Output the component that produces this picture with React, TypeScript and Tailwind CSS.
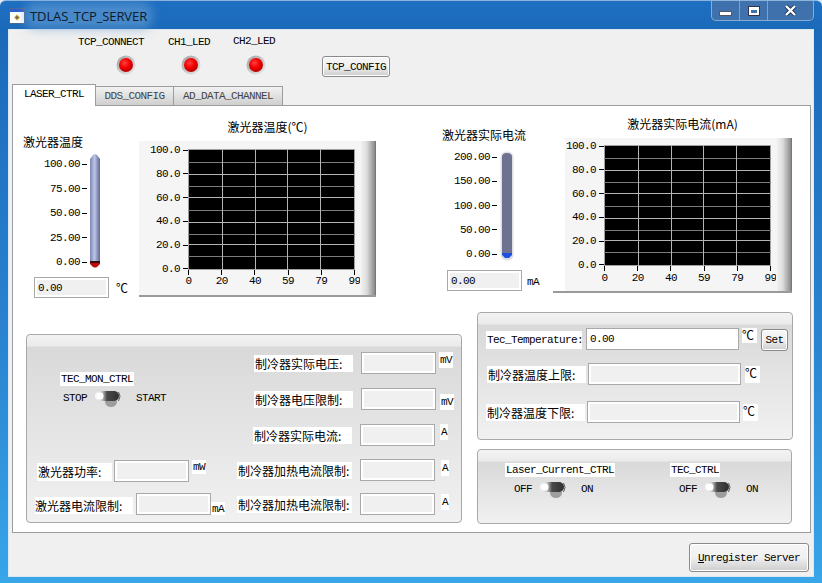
const mono = "font-['Liberation_Mono','Noto_Sans_CJK_SC',monospace] text-[11px] tracking-[-0.6px] leading-[12px] text-black whitespace-nowrap";
const cjk = "font-['Noto_Sans_CJK_SC','Liberation_Sans',sans-serif] text-[12px] leading-[14px] text-black whitespace-nowrap";
const valueBox = "w-[75px] h-[22px] shrink-0 border border-[#a9a9a9] bg-[#f0f0f0] shadow-[inset_0_0_0_2px_#fff]";
const groupBg = "bg-[linear-gradient(180deg,#f3f3f3_0,#ebebeb_11px,#d9d9d9_12px,#f1f1f1_100%)] border border-[#a8a8a8] rounded-[4px]";

const hLines = [
  { y: 13, major: false }, { y: 25, major: true }, { y: 37, major: false }, { y: 48, major: true },
  { y: 61, major: false }, { y: 73, major: true }, { y: 85, major: false }, { y: 95, major: true }, { y: 107, major: false },
];
const vLines = [34, 67, 99, 132];
const yLabels = ['100.0', '80.0', '60.0', '40.0', '20.0', '0.0'];
const xLabels = ['0', '20', '40', '59', '79', '99'];

function Plot() {
  return (
    <svg width="167" height="121" className="block shrink-0">
      <rect width="167" height="121" fill="#000" />
      <rect x="0.5" y="0.5" width="166" height="120" fill="none" stroke="#a0a0a0" />
      {hLines.map((l) => (
        <line key={l.y} x1="0" x2="167" y1={l.y + 0.5} y2={l.y + 0.5} stroke={l.major ? '#b4b4b4' : '#7c7c7c'} />
      ))}
      {vLines.map((x) => (
        <line key={x} x1={x + 0.5} x2={x + 0.5} y1="0" y2="121" stroke="#b4b4b4" />
      ))}
    </svg>
  );
}

function Chart({ wide }: { wide?: boolean }) {
  return (
    <div className={`flex border-b-2 border-[#9a9a9a] ${wide ? 'w-[239px] h-[155px] bg-[linear-gradient(90deg,#fff_12px,#f5f5f5_12px)]' : 'w-[237px] h-[156px] bg-[#f5f5f5]'}`}>
      <div className={`flex flex-col justify-between h-[131px] shrink-0 ${wide ? 'w-[51px] mt-[2px]' : 'w-[49px] mt-[3px]'}`}>
        {yLabels.map((l) => (
          <div key={l} className="flex items-center justify-end gap-[3px] h-[12px]">
            <span className={mono}>{l}</span>
            <span className="w-[5px] h-px bg-black" />
          </div>
        ))}
      </div>
      <div className={`shrink-0 w-[167px] ${wide ? 'mt-[7px]' : 'mt-[8px]'}`}>
        <Plot />
        <div className="flex justify-between">
          {xLabels.map((l) => (
            <div key={l} className="flex flex-col items-center w-px">
              <span className="w-px h-[5px] bg-black" />
              <span className={`${mono} ${wide ? 'mt-[1px]' : 'mt-0'}`}>{l}</span>
            </div>
          ))}
        </div>
      </div>
      <div className="flex-1" />
      <div className="w-[16px] bg-[linear-gradient(90deg,#f5f5f5,#dcdcdc_45%,#8a8a8a)] border-r border-[#777]" />
    </div>
  );
}

function Scale({ items }: { items: string[] }) {
  return (
    <div className="flex flex-col justify-between flex-1">
      {items.map((l) => (
        <div key={l} className="flex items-center justify-end gap-[2px] h-[12px]">
          <span className={mono}>{l}</span>
          <span className="w-[5px] h-px bg-black" />
        </div>
      ))}
    </div>
  );
}

function RedTube() {
  return (
    <svg width="10" height="114" className="block shrink-0">
      <defs>
        <linearGradient id="tubeA" x1="0" x2="1" y1="0" y2="0">
          <stop offset="0" stopColor="#7c86b4" />
          <stop offset="0.45" stopColor="#bcc4e6" />
          <stop offset="1" stopColor="#5f6690" />
        </linearGradient>
      </defs>
      <path d="M0 5 L3 1 Q5 -1 7 1 L10 5 V108 H0 Z" fill="url(#tubeA)" />
      <rect x="0" y="107" width="10" height="2" fill="#301010" />
      <path d="M0 109 H10 V110 L7 113 Q5 114 3 113 L0 110 Z" fill="#c00808" />
    </svg>
  );
}

function BlueTube() {
  return (
    <svg width="14" height="110" className="block shrink-0">
      <rect x="0.5" y="0.5" width="13" height="109" rx="6" fill="#e0e0e4" />
      <path d="M2 6 Q2 2 7 2 Q12 2 12 6 V104 H2 Z" fill="#6f7190" />
      <path d="M2 102 H12 V104 L9 107 H5 L2 104 Z" fill="#1c4fe0" />
    </svg>
  );
}

function Led() {
  return (
    <svg width="20" height="20" className="block">
      <defs>
        <radialGradient id="ledRed" cx="0.4" cy="0.35" r="0.7">
          <stop offset="0" stopColor="#ff4040" />
          <stop offset="0.5" stopColor="#f40000" />
          <stop offset="1" stopColor="#b00000" />
        </radialGradient>
        <linearGradient id="ledRing" x1="0" x2="1" y1="0" y2="1">
          <stop offset="0" stopColor="#a0a0a0" />
          <stop offset="1" stopColor="#ececec" />
        </linearGradient>
      </defs>
      <circle cx="10" cy="10" r="9.5" fill="url(#ledRing)" />
      <circle cx="10" cy="10" r="7" fill="url(#ledRed)" />
    </svg>
  );
}

function Toggle({ id }: { id: string }) {
  return (
    <svg width="27" height="18" className="block shrink-0">
      <defs>
        <linearGradient id={id} x1="0" x2="1" y1="0" y2="0">
          <stop offset="0" stopColor="#ffffff" />
          <stop offset="0.28" stopColor="#d0d0d0" />
          <stop offset="0.5" stopColor="#4a4a4a" />
          <stop offset="1" stopColor="#303030" />
        </linearGradient>
      </defs>
      <ellipse cx="17" cy="12.5" rx="6" ry="5.5" fill="#8c8c8c" opacity="0.8" />
      <rect x="1" y="2" width="24" height="10" rx="5" fill={`url(#${id})`} />
      <circle cx="6" cy="7" r="3.5" fill="#fff" />
      <path d="M24.5 3 Q27.5 7 24.5 12" stroke="#555" fill="none" />
    </svg>
  );
}

function Switch({ off, on, id, gap }: { off: string; on: string; id: string; gap?: boolean }) {
  return (
    <div className={`flex items-start mt-[3px] ${gap ? 'pl-[3px]' : 'pl-[9px]'}`}>
      <span className={`${mono} mt-[3px] mr-[7px]`}>{off}</span>
      <Toggle id={id} />
      <span className={`${mono} mt-[3px] ml-[15px]`}>{on}</span>
    </div>
  );
}

function Field({ label, unit, labelCls, unitCls, rowCls }: { label: string; unit: string; labelCls: string; unitCls: string; rowCls: string }) {
  return (
    <div className={`flex items-start ${rowCls}`}>
      <div className={`${cjk} bg-white h-[17px] flex items-center pl-[1px] mt-[3px] ${labelCls}`}>{label}</div>
      <div className={`${valueBox} ml-[8px]`} />
      <span className={`${mono} bg-white px-[1px] h-[16px] flex items-center ${unitCls}`}>{unit}</span>
    </div>
  );
}

function WhiteLabel({ text }: { text: string }) {
  return <div className={`${mono} bg-white self-start h-[14px] flex items-center px-[1px]`}>{text}</div>;
}

function TabItem({ text, active, w }: { text: string; active?: boolean; w: string }) {
  if (active) {
    return (
      <div className={`${mono} ${w} h-[22px] -mb-px z-10 bg-white border border-b-0 border-[#9c9c9c] flex items-center justify-center pb-[3px]`}>
        {text}
      </div>
    );
  }
  return (
    <div className={`${mono} ${w} h-[19px] border border-b-0 border-[#9c9c9c] bg-[linear-gradient(180deg,#f2f2f2,#cfcfcf)] flex items-center justify-center !text-[#444] -ml-px`}>
      {text}
    </div>
  );
}

function Button({ text, cls }: { text: React.ReactNode; cls: string }) {
  return (
    <div className={`${mono} ${cls} border border-[#8a8a8a] rounded-[3px] bg-[linear-gradient(180deg,#f6f6f6,#f0f0f0_50%,#cdcdcd)] shadow-[inset_0_0_0_1px_#fff] flex items-center justify-center`}>
      {text}
    </div>
  );
}

function TitleBar() {
  return (
    <div className="h-[28px] shrink-0 flex items-start pl-[9px] pt-[7px] relative">
      <svg width="16" height="16" className="block shrink-0">
        <rect x="0.5" y="0.5" width="15" height="15" fill="#fff" stroke="#486a94" />
        <rect x="1" y="1" width="14" height="3" fill="#2c5fd0" />
        <path d="M8 6.5 L11 9.5 L8 12.5 L5 9.5 Z" fill="#d8a020" />
        <circle cx="8" cy="9.5" r="1.2" fill="#506080" />
      </svg>
      <span className="ml-[5px] font-['Open_Sans','Liberation_Sans',sans-serif] text-[13px] tracking-[-0.1px] leading-[16px] text-[#0c1c2c] bg-[#6fa3d6]/50 shadow-[0_0_10px_6px_rgba(111,163,214,0.5)] rounded-[6px]">
        TDLAS_TCP_SERVER
      </span>
      <div className="ml-auto mr-[8px] -mt-[7px] w-[103px] h-[20px] flex border border-t-0 border-[#a8c4e0]/70 rounded-b-[5px] bg-[#3f72ac]">
        <div className="w-[28px] flex items-center justify-center border-r border-[#a8c4e0]/60">
          <span className="w-[11px] h-[3px] mt-[6px] bg-white border border-[#556] box-content" />
        </div>
        <div className="w-[28px] flex items-center justify-center border-r border-[#a8c4e0]/60">
          <span className="w-[6px] h-[3px] border-2 border-t-[3px] border-white box-content outline outline-1 outline-[#335]" />
        </div>
        <div className="flex-1 flex items-center justify-center">
          <svg width="13" height="11">
            <path d="M2 1 L11 10 M11 1 L2 10" stroke="#1d3350" strokeWidth="4" />
            <path d="M2 1 L11 10 M11 1 L2 10" stroke="#fff" strokeWidth="2.4" />
          </svg>
        </div>
      </div>
    </div>
  );
}

export default function App() {
  return (
    <div className="w-[822px] h-[583px] overflow-hidden bg-[#dfe9f2]">
      <div className="w-full h-full flex flex-col rounded-t-[6px] border-t border-[#8cb4dc] bg-[linear-gradient(180deg,#1f6fc2_0,#1b6ab9_30px,#2a85d0_60%,#38a6e8_100%)]">
        <TitleBar />
        <div className="mx-[8px] h-[548px] bg-[#f0f0f0] border border-[#dbe8f3] flex flex-col">
          {/* LEDs */}
          <div className="h-[54px] shrink-0 flex items-start pl-[69px] pt-[6px]">
            <div className="flex flex-col w-[90px] shrink-0">
              <span className={mono}>TCP_CONNECT</span>
              <div className="ml-[38px] mt-[7px]"><Led /></div>
            </div>
            <div className="flex flex-col w-[65px] shrink-0">
              <span className={mono}>CH1_LED</span>
              <div className="ml-[13px] mt-[7px]"><Led /></div>
            </div>
            <div className="flex flex-col w-[89px] shrink-0 -mt-px">
              <span className={mono}>CH2_LED</span>
              <div className="ml-[13px] mt-[8px]"><Led /></div>
            </div>
            <Button text="TCP_CONFIG" cls="w-[68px] h-[21px] mt-[20px]" />
          </div>

          {/* Tabs */}
          <div className="h-[21px] shrink-0 flex items-end pl-[3px]">
            <TabItem text="LASER_CTRL" active w="w-[84px]" />
            <TabItem text="DDS_CONFIG" w="w-[79px]" />
            <TabItem text="AD_DATA_CHANNEL" w="w-[110px]" />
          </div>

          <div className="ml-[3px] mr-[2px] h-[428px] shrink-0 bg-white border border-[#9c9c9c] flex flex-col">
            {/* Charts */}
            <div className="h-[200px] shrink-0 flex items-start pl-[10px]">
              <div className="w-[116px] shrink-0 mt-[29px] flex flex-col">
                <span className={cjk}>激光器温度</span>
                <div className="flex items-stretch w-[77px] mt-[5px] h-[114px]">
                  <div className="flex flex-col w-[64px] pt-[4px]">
                    <Scale items={['100.00', '75.00', '50.00', '25.00', '0.00']} />
                  </div>
                  <div className="ml-[3px]"><RedTube /></div>
                </div>
                <div className="flex items-center ml-[11px] mt-[9px]">
                  <div className={`${valueBox} ${mono} !h-[21px] flex items-center pl-[3px]`}>0.00</div>
                  <span className={`${cjk} ml-[7px]`}>℃</span>
                </div>
              </div>
              <div className="flex flex-col items-center mt-[14px]">
                <span className={`${cjk} h-[21px] pl-[20px]`}>激光器温度(℃)</span>
                <Chart />
              </div>
              <div className="w-[111px] shrink-0 ml-[66px] mt-[22px] flex flex-col">
                <span className={cjk}>激光器实际电流</span>
                <div className="flex items-start mt-[9px] h-[107px]">
                  <div className="flex flex-col w-[55px] h-[109px]">
                    <Scale items={['200.00', '150.00', '100.00', '50.00', '0.00']} />
                  </div>
                  <div className="ml-[3px]"><BlueTube /></div>
                </div>
                <div className="flex items-end ml-[5px] mt-[12px]">
                  <div className={`${valueBox} ${mono} !h-[21px] flex items-center pl-[3px]`}>0.00</div>
                  <span className={`${mono} ml-[5px] mb-[3px]`}>mA</span>
                </div>
              </div>
              <div className="flex flex-col items-center mt-[11px]">
                <span className={`${cjk} h-[21px] pl-[20px]`}>激光器实际电流(mA)</span>
                <Chart wide />
              </div>
            </div>

            {/* Group boxes */}
            <div className="flex items-start">
              <div className={`${groupBg} ml-[13px] mt-[28px] w-[436px] h-[189px] flex shrink-0`}>
                <div className="w-[210px] shrink-0 flex flex-col">
                  <div className="flex flex-col pl-[33px] mt-[37px] h-[36px] shrink-0">
                    <WhiteLabel text="TEC_MON_CTRL" />
                    <Switch off="STOP" on="START" id="togMon" gap />
                  </div>
                  <div className="flex items-start pl-[10px] mt-[52px]">
                    <div className={`${cjk} bg-white w-[75px] h-[18px] flex items-center mt-[3px] px-[1px]`}>激光器功率:</div>
                    <div className={`${valueBox} ml-[2px]`} />
                    <span className={`${mono} bg-white ml-[3px] h-[14px] px-[1px] flex items-center`}>mW</span>
                  </div>
                  <div className="flex items-start pl-[8px] mt-[11px]">
                    <div className={`${cjk} bg-white w-[98px] h-[17px] flex items-center mt-[4px]`}>激光器电流限制:</div>
                    <div className={`${valueBox} ml-[3px]`} />
                    <span className={`${mono} bg-white h-[13px] px-[1px] flex items-center mt-[9px]`}>mA</span>
                  </div>
                </div>
                <div className="flex-1 flex flex-col items-start">
                  <Field label="制冷器实际电压:" unit="mV" labelCls="w-[99px]" unitCls="ml-[3px]" rowCls="mt-[17px] ml-[17px]" />
                  <Field label="制冷器电压限制:" unit="mV" labelCls="w-[99px]" unitCls="ml-[4px] mt-[6px]" rowCls="mt-[14px] ml-[17px]" />
                  <Field label="制冷器实际电流:" unit="A" labelCls="w-[99px]" unitCls="ml-[5px]" rowCls="mt-[14px] ml-[16px]" />
                  <Field label="制冷器加热电流限制:" unit="A" labelCls="w-[115px]" unitCls="ml-[6px] mt-[1px]" rowCls="mt-[13px]" />
                  <Field label="制冷器加热电流限制:" unit="A" labelCls="w-[115px]" unitCls="ml-[6px] mt-[1px]" rowCls="mt-[12px]" />
                </div>
              </div>

              <div className="ml-[15px] mt-[6px] flex flex-col shrink-0">
                <div className={`${groupBg} w-[316px] h-[128px] flex flex-col`}>
                  <div className="flex items-start pl-[8px] mt-[15px]">
                    <div className={`${mono} bg-white w-[96px] h-[18px] flex items-center mt-[3px] px-[1px]`}>Tec_Temperature:</div>
                    <div className={`${mono} ml-[4px] w-[153px] h-[22px] border border-[#a9a9a9] bg-white flex items-center pl-[3px]`}>0.00</div>
                    <span className={`${cjk} bg-white ml-[3px] w-[15px] h-[15px]`}>℃</span>
                    <Button text="Set" cls="w-[27px] h-[22px] ml-[4px] mt-[1px]" />
                  </div>
                  <div className="flex items-start pl-[9px] mt-[12px]">
                    <div className={`${cjk} bg-white w-[99px] h-[17px] flex items-center mt-[3px] px-[1px]`}>制冷器温度上限:</div>
                    <div className={`${valueBox} !w-[153px] ml-[2px]`} />
                    <span className={`${cjk} bg-white ml-[4px] mt-[3px] w-[15px] h-[17px]`}>℃</span>
                  </div>
                  <div className="flex items-start pl-[8px] mt-[16px]">
                    <div className={`${cjk} bg-white w-[99px] h-[17px] flex items-center mt-[3px] px-[1px]`}>制冷器温度下限:</div>
                    <div className={`${valueBox} !w-[153px] ml-[2px]`} />
                    <span className={`${cjk} bg-white ml-[3px] mt-[3px] w-[15px] h-[17px]`}>℃</span>
                  </div>
                </div>
                <div className={`${groupBg} w-[315px] h-[75px] mt-[9px] flex pl-[27px] pt-[13px]`}>
                  <div className="w-[165px] shrink-0 flex flex-col">
                    <WhiteLabel text="Laser_Current_CTRL" />
                    <Switch off="OFF" on="ON" id="togLaser" />
                  </div>
                  <div className="flex flex-col">
                    <WhiteLabel text="TEC_CTRL" />
                    <Switch off="OFF" on="ON" id="togTec" />
                  </div>
                </div>
              </div>
            </div>
          </div>

          {/* Footer */}
          <div className="flex justify-end pr-[4px] pt-[10px]">
            <Button
              text={<span><span className="underline">U</span>nregister Server</span>}
              cls="w-[120px] h-[29px]"
            />
          </div>
        </div>
      </div>
    </div>
  );
}
